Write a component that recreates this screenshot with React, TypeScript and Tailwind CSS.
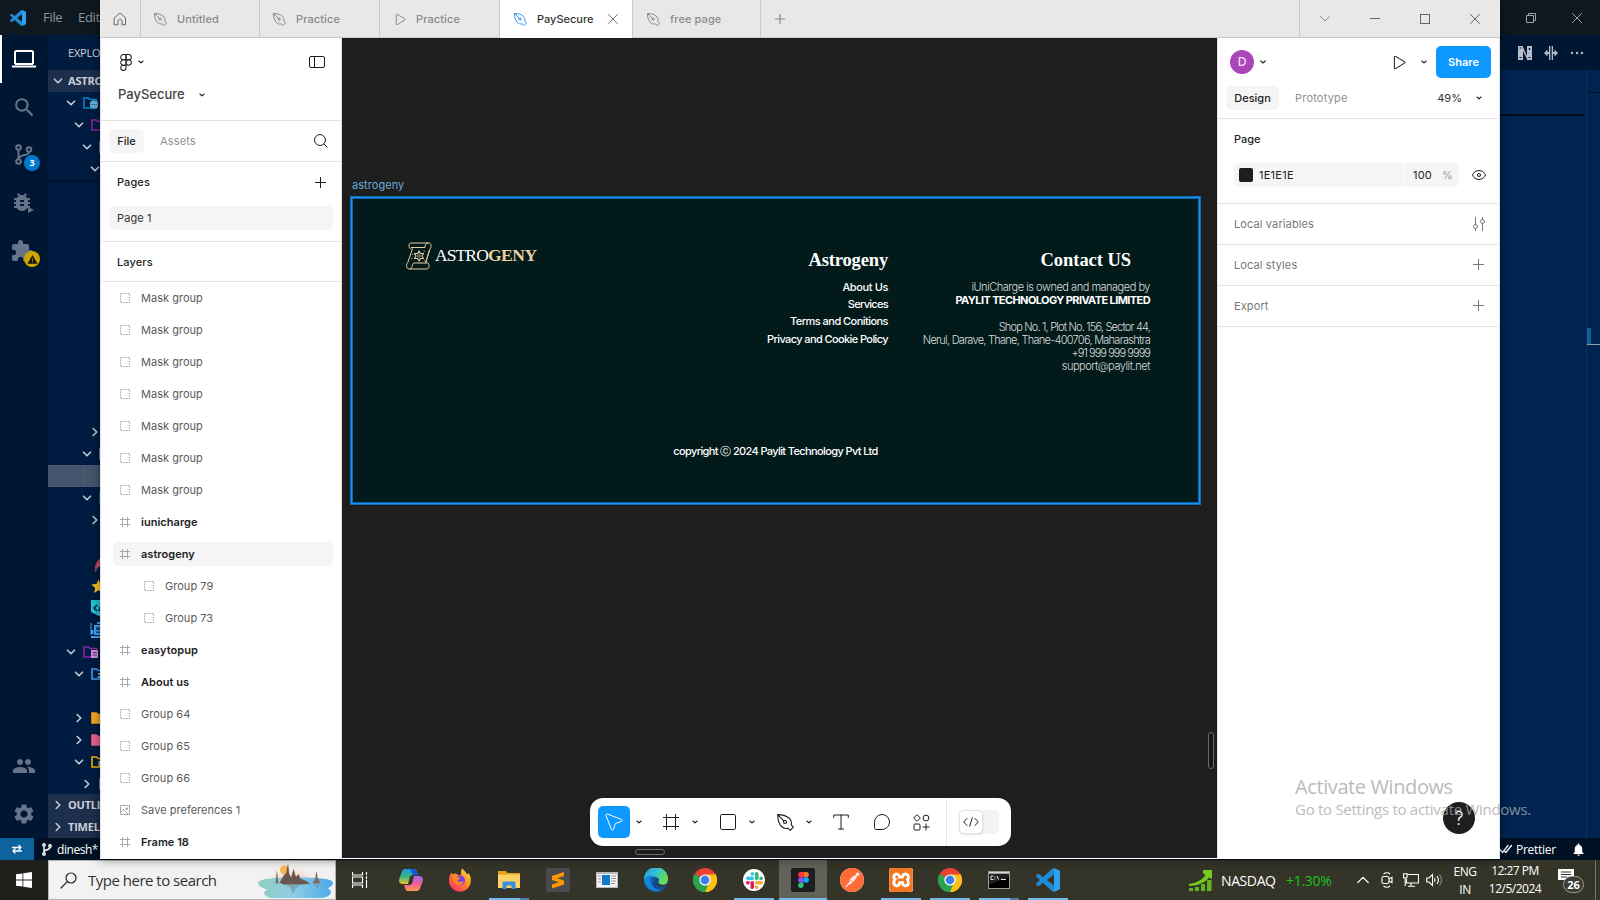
import React from "react";
import { MdBugReport, MdExtension, MdNotifications, MdPeople, MdSearch, MdSettings, MdStar, MdWarning } from "react-icons/md";
import { SiPostman, SiXampp } from "react-icons/si";

type IconProps = { className?: string };

const VS_PATH =
  "M23.15 2.587L18.21.21a1.494 1.494 0 0 0-1.705.29l-9.46 8.63-4.12-3.128a.999.999 0 0 0-1.276.057L.327 7.261A1 1 0 0 0 .326 8.74L3.899 12 .326 15.26a1 1 0 0 0 .001 1.479L1.65 17.94a.999.999 0 0 0 1.276.057l4.12-3.128 9.46 8.63a1.492 1.492 0 0 0 1.704.29l4.942-2.377A1.5 1.5 0 0 0 24 20.06V3.939a1.5 1.5 0 0 0-.85-1.352zm-5.146 14.861L10.826 12l7.178-5.448v10.896z";

const FIGMA_PATHS = [
  { d: "M9.5 57a9.5 9.5 0 0 0 9.5-9.5V38H9.5a9.5 9.5 0 0 0 0 19z", c: "#24cb71" },
  { d: "M0 28.5A9.5 9.5 0 0 1 9.5 19H19v19H9.5A9.5 9.5 0 0 1 0 28.5z", c: "#874fff" },
  { d: "M0 9.5A9.5 9.5 0 0 1 9.5 0H19v19H9.5A9.5 9.5 0 0 1 0 9.5z", c: "#ff3737" },
  { d: "M19 0h9.5a9.5 9.5 0 0 1 0 19H19V0z", c: "#ff7237" },
  { d: "M38 28.5a9.5 9.5 0 1 1-19 0 9.5 9.5 0 0 1 19 0z", c: "#00b6ff" },
];

function VsLogo({ className }: IconProps) {
  return (
    <svg viewBox="0 0 24 24" className={className}>
      <path d={VS_PATH} fill="#1f8ad6" />
      <path d="M18 .2l5.2 2.4a1.5 1.5 0 0 1 .8 1.3v16.2a1.5 1.5 0 0 1-.8 1.3L18.2 23.8z" fill="#2ea3ee" />
    </svg>
  );
}

function Line({ className, d, vb = "0 0 16 16", w = 1 }: IconProps & { d: string; vb?: string; w?: number }) {
  return (
    <svg viewBox={vb} className={className} fill="none" stroke="currentColor" strokeWidth={w} strokeLinecap="round" strokeLinejoin="round">
      <path d={d} />
    </svg>
  );
}

function Caret({ className = "" }: IconProps) {
  return <Line className={`h-[8px] w-[8px] shrink-0 ${className}`} vb="0 0 8 8" d="M1.900 3 4 4.900 6.100 3" w={1.100} />;
}

function Pen({ className }: IconProps) {
  return (
    <svg viewBox="0 0 17 17" className={className} fill="none" stroke="currentColor" strokeWidth="1.1" strokeLinejoin="round">
      <path d="M.6.6C5.4.8 9.4 1.6 12 4c2 1.900 2.900 4.300 2.200 6.800l2.200 2.400-3.200 3.200-2.400-2.200C8.300 14.900 5.900 14 4 12 1.600 9.400.8 5.400.6.6zM.8.800l6 6" />
      <circle cx="8" cy="8" r="1.500" />
    </svg>
  );
}

function Play({ className }: IconProps) {
  return <Line className={className} vb="0 0 14 16" d="M1.500 2.200c0-.8.6-1.200 1.300-.8l9.500 5.700c.7.400.7 1.200 0 1.600L2.800 14.600c-.7.400-1.300 0-1.300-.8z" w={1.100} />;
}

/* ---------- Code editor window ---------- */

type TreeRow = { dir?: "down" | "right"; pad?: string; icon?: React.ReactNode; active?: boolean };

function Folder({ color, solid, children }: { color: string; solid?: boolean; children?: React.ReactNode }) {
  return (
    <svg viewBox="0 0 16 14" className="h-[14px] w-4 shrink-0" fill={solid ? color : "none"} stroke={color} strokeWidth="1.500">
      <path d="M1 2h4.500l1.500 1.500h6.500v8.500H1z" />
      {children}
    </svg>
  );
}

const globe = (
  <g>
    <circle cx="11" cy="8.500" r="4" fill="#8fd3fb" stroke="none" />
    <path d="M7.500 8.500h7M11 5v7M9.500 5.300c-1 2-1 4 0 6.400M12.500 5.300c1 2 1 4 0 6.400" stroke="#0b5a94" strokeWidth=".6" />
  </g>
);

const stickyRows: TreeRow[] = [
  { dir: "down", pad: "pl-[18px]", icon: <Folder color="#0288d1">{globe}</Folder> },
  { dir: "down", pad: "pl-[26px]", icon: <Folder color="#8e24aa"><path d="M9 7h6v6H9z" fill="#b567c9" stroke="none" /></Folder> },
  { dir: "down", pad: "pl-[34px]", icon: <Folder color="#90a4ae" /> },
  { dir: "down", pad: "pl-[42px]" },
];

const treeRows: TreeRow[] = [
  { dir: "right", pad: "pl-[42px]" },
  { dir: "down", pad: "pl-[34px]", icon: <Folder color="#90a4ae" /> },
  { active: true },
  { dir: "down", pad: "pl-[34px]", icon: <Folder color="#00897b" /> },
  { dir: "right", pad: "pl-[42px]" },
  {},
  { pad: "pl-[46px]", icon: <svg viewBox="0 0 12 16" className="h-4 w-3 shrink-0"><path d="M1 15C0 8 4 2 11 0c1 6-3 11-9 12z" fill="#c2455a" /><path d="M1 16 7 5" stroke="#e0808c" strokeWidth=".7" /></svg> },
  { pad: "pl-[42px]", icon: <MdStar className="h-[17px] w-[17px] shrink-0 text-[#ffca28]" /> },
  { pad: "pl-[43px]", icon: <svg viewBox="0 0 16 16" className="h-4 w-4 shrink-0"><path d="M0 0h16v12l-8 4-8-4z" fill="#26c6da" /><path d="M6 5 3 8l3 3M8 11l2-6" stroke="#00204a" strokeWidth="1.600" fill="none" /></svg> },
  { pad: "pl-[42px]", icon: <svg viewBox="0 0 16 16" className="h-4 w-4 shrink-0" fill="#42a5f5"><path d="M4 3h10v10H4zM.5 1h1v12h-1zM1 14h15v2H1zM7 0h5v2H7zM1.500 8h2v4h-2z" /><path d="M6 5h7v3H6zM6 9.500h7V11H6z" fill="#0c4a86" /></svg> },
  { dir: "down", pad: "pl-[18px]", icon: <Folder color="#8e24aa"><path d="M8 5h7v8H8z" fill="#ce93d8" stroke="none" /><path d="M9.500 7.500h4M9.500 10h4" stroke="#6a1b9a" strokeWidth="1" /></Folder> },
  { dir: "down", pad: "pl-[26px]", icon: <Folder color="#42a5f5"><path d="M6.500 10h3M7 7h3" stroke="#90caf9" strokeWidth="1.300" /></Folder> },
  {},
  { dir: "right", pad: "pl-[26px]", icon: <Folder color="#f9a825" solid /> },
  { dir: "right", pad: "pl-[26px]", icon: <Folder color="#f06292" solid /> },
  { dir: "down", pad: "pl-[26px]", icon: <Folder color="#ffb300"><path d="M7.500 6H14v6H7.500z" fill="#c9b27a" stroke="none" /></Folder> },
  { dir: "right", pad: "pl-[34px]", icon: <Folder color="#90a4ae" /> },
];

function Twist({ dir }: { dir: "down" | "right" }) {
  return <Line className="h-[10px] w-[10px] shrink-0 text-[#c5ccd6]" vb="0 0 10 10" d={dir === "down" ? "M1.500 3.200 5 6.800l3.500-3.600" : "M3.200 1.500 6.800 5 3.200 8.500"} w={1.600} />;
}

function Tree({ rows }: { rows: TreeRow[] }) {
  return (
    <>
      {rows.map((r, i) => (
        <div key={i} className={`flex h-[22px] items-center gap-[7px] ${r.pad ?? ""} ${r.active ? "bg-[#44566f]" : ""}`}>
          {r.active && <div className="ml-[36px] h-full w-px bg-[#5c5a55]" />}
          {r.dir && <Twist dir={r.dir} />}
          {r.icon}
        </div>
      ))}
    </>
  );
}

function Section({ name }: { name: string }) {
  return (
    <div className="flex h-[22px] items-center gap-[5px] bg-[#1c2f4d] pl-[5px] text-[11px] font-bold text-[#ccd0d6]">
      <Twist dir={name === "ASTROGENY" ? "down" : "right"} />
      <span className="tracking-[-0.2px]">{name}</span>
    </div>
  );
}

function ActivityCell({ children }: { children: React.ReactNode }) {
  return <div className="relative flex h-12 w-12 shrink-0 items-center justify-center text-[#667489]">{children}</div>;
}

function Editor() {
  return (
    <div className="flex h-[860px] w-full flex-col font-['Open_Sans','Noto_Sans',sans-serif]">
      <div className="flex h-[35px] shrink-0 items-center bg-[#0e1820] text-[13px] text-[#90969b]">
        <VsLogo className="ml-[10px] h-4 w-4" />
        <span className="ml-[17px] w-[35px] pt-px tracking-[-0.3px]">File</span>
        <span className="pt-px tracking-[-0.3px]">Edit</span>
        <svg viewBox="0 0 10 10" className="ml-auto mr-[36px] h-[10px] w-[10px]" fill="none" stroke="#a0a5aa">
          <path d="M.5 2.500h7v7h-7zM2.500 2.500v-2h7v7h-2" />
        </svg>
        <Line className="mr-[18px] h-[10px] w-[10px] text-[#a0a5aa]" vb="0 0 10 10" d="M.5.500l9 9M9.500.500l-9 9" />
      </div>
      <div className="flex min-h-0 flex-1">
        <div className="flex w-12 shrink-0 flex-col bg-[#001733]">
          <div className="flex h-12 items-center justify-center border-l-2 border-white pr-[2px] text-white">
            <svg viewBox="0 0 24 18" className="h-[18px] w-6" fill="none" stroke="currentColor" strokeWidth="2">
              <path d="M3 14V2.500C3 1.600 3.600 1 4.500 1h15c.9 0 1.500.6 1.500 1.500V14M0 16.500h24M3 14h18" />
            </svg>
          </div>
          <ActivityCell><MdSearch className="h-[25px] w-[25px]" /></ActivityCell>
          <ActivityCell>
            <svg viewBox="0 0 18 22" className="h-[22px] w-[18px]" fill="none" stroke="currentColor" strokeWidth="2">
              <circle cx="3.500" cy="3.500" r="2.300" /><circle cx="3.500" cy="17.500" r="2.300" /><circle cx="14" cy="5.500" r="2.300" />
              <path d="M3.500 6v9M14 8c0 4-8 2-10 6" />
            </svg>
            <span className="absolute left-6 top-6 flex h-4 w-4 items-center justify-center rounded-full bg-[#007acc] text-[9px] font-bold text-white">3</span>
          </ActivityCell>
          <ActivityCell>
            <MdBugReport className="-ml-1 -mt-[2px] h-[24px] w-[24px]" />
            <svg viewBox="0 0 6 6" className="absolute left-[28px] top-[28px] h-[6px] w-[6px]" fill="currentColor"><path d="M0 0l6 3-6 3z" /></svg>
          </ActivityCell>
          <ActivityCell>
            <MdExtension className="-ml-1 h-[24px] w-[24px]" />
            <span className="absolute left-6 top-6 flex h-4 w-4 items-center justify-center rounded-full bg-[#cca700] text-[#171717]"><MdWarning className="h-[11px] w-[11px]" /></span>
          </ActivityCell>
          <div className="flex-1" />
          <ActivityCell><MdPeople className="h-[24px] w-[24px]" /></ActivityCell>
          <ActivityCell><MdSettings className="h-[24px] w-[24px]" /></ActivityCell>
        </div>
        <div className="flex w-[52px] shrink-0 flex-col overflow-hidden bg-[#001c40]">
          <div className="flex h-[35px] shrink-0 items-center pl-5 pt-px text-[11px] tracking-[-0.2px] text-[#ccd2da]">EXPLORER</div>
          <Section name="ASTROGENY" />
          <div className="border-b-2 border-[#00122b]"><Tree rows={stickyRows} /></div>
          <div className="h-[239px] shrink-0" />
          <Tree rows={treeRows} />
          <div className="-mt-px"><Section name="OUTLINE" /></div>
          <Section name="TIMELINE" />
        </div>
        <div className="flex flex-1 flex-col bg-[#002451]">
          <div className="flex h-[35px] items-center justify-end gap-[12px] bg-[#001733] pr-[16px] text-[#b6bec9]">
            <svg viewBox="0 0 14 14" className="h-[14px] w-[14px]" fill="currentColor">
              <path d="M0 0h5v14H0zM9 0h5v14H9zM5 1l4 9v3L5 5z" />
              <path d="M1.500 2h2M10.500 3h2M11.500 2v2M1.500 11.500h2M10.500 11.500h2" stroke="#001733" />
            </svg>
            <svg viewBox="0 0 14 14" className="h-[14px] w-[14px]" fill="currentColor"><path d="M5 0h1.300v14H5zM7.700 0H9v14H7.700zM0 7l3.500-3.500v2.500H5v2H3.500v2.500zM14 7l-3.500-3.500v2.500H9v2h1.500v2.500z" /></svg>
            <svg viewBox="0 0 14 4" className="h-1 w-[14px]" fill="currentColor"><circle cx="2" cy="2" r="1.200" /><circle cx="7" cy="2" r="1.200" /><circle cx="12" cy="2" r="1.200" /></svg>
          </div>
          <div className="flex flex-1">
            <div className="flex-1 pt-[44px]"><div className="mr-[2px] h-[2px] bg-[#000b1c]" /></div>
            <div className="w-[14px] border-l border-[#0e3059] pt-[22px]">
              <div className="h-px bg-[#00122b]" />
              <div className="mt-[235px] h-[16px] w-1 bg-[#0f5f93]" />
              <div className="h-px bg-[#8fa0b5]" />
            </div>
          </div>
        </div>
      </div>
      <div className="flex h-[22px] shrink-0 items-center bg-[#001126] text-[12px] text-white">
        <div className="flex h-full w-[34px] items-center justify-center bg-[#0e639c]">
          <Line className="h-[12px] w-[12px]" vb="0 0 12 12" d="M1.500 4.500H10M8 2.500 10 4.500 8 6.500M10.500 8H2M4 6 2 8l2 2" w={1.300} />
        </div>
        <svg viewBox="0 0 10 13" className="ml-2 h-[13px] w-[10px]" fill="none" stroke="currentColor" strokeWidth="1.400">
          <circle cx="2" cy="2" r="1.200" /><circle cx="2" cy="11" r="1.200" /><circle cx="8" cy="3" r="1.200" /><path d="M2 3.500v6M8 4.500C8 7.500 2 6 2 9" />
        </svg>
        <span className="ml-[5px] pt-px tracking-[-0.45px]">dinesh*</span>
        <Line className="ml-auto h-[10px] w-[14px]" vb="0 0 14 10" d="M1 5.500 3.500 8.500 9 1.500M5.500 7 6.800 8.500 12.500 1.500" w={1.300} />
        <span className="ml-[3px] pt-px tracking-[-0.25px]">Prettier</span>
        <MdNotifications className="ml-[15px] mr-[14px] h-[15px] w-[15px]" />
      </div>
    </div>
  );
}

/* ---------- Design tool window ---------- */

function Tab({ label, className, icon, active }: { label: string; className: string; icon: React.ReactNode; active?: boolean }) {
  return (
    <div className={`flex h-full shrink-0 items-center border-r border-[#c9c9c9] pl-[13px] ${active ? "bg-white text-[#333]" : "border-b pt-px text-[#8a8a8a]"} ${className}`}>
      {icon}
      <span className={`ml-[10px] pt-px text-[11px] font-medium ${active ? "" : "tracking-[0.1px]"}`}>{label}</span>
      {active && <Line className="ml-[15px] h-[10px] w-[10px] text-[#777]" vb="0 0 10 10" d="M.5.500l9 9M9.500.500l-9 9" w={1} />}
    </div>
  );
}

function TitleBar() {
  return (
    <div className="flex h-[38px] shrink-0 bg-[#e8e8e8]">
      <div className="flex w-[41px] items-center justify-center border-b border-r border-[#c9c9c9] text-[#666]">
        <Line className="h-[14px] w-[14px]" vb="0 0 14 14" d="M1.500 5.800 7 1l5.500 4.800v7H9V9c0-1-.8-1.700-2-1.700S5 8 5 9v3.800H1.500z" />
      </div>
      <Tab label="Untitled" className="w-[119px]" icon={<Pen className="h-[13px] w-[13px] text-[#777]" />} />
      <Tab label="Practice" className="w-[120px]" icon={<Pen className="h-[13px] w-[13px] text-[#777]" />} />
      <Tab label="Practice" className="w-[120px]" icon={<Play className="ml-[2px] h-[13px] w-[11px] text-[#777]" />} />
      <Tab label="PaySecure" className="w-[133px]" active icon={<Pen className="ml-px h-[13px] w-[13px] text-[#0d84f0]" />} />
      <Tab label="free page" className="w-[128px]" icon={<Pen className="ml-px h-[13px] w-[13px] text-[#777]" />} />
      <div className="flex flex-1 items-center border-b border-r border-[#c9c9c9] pl-[14px] text-[#888]">
        <Line className="h-[10px] w-[10px]" vb="0 0 10 10" d="M5 .500v9M.5 5h9" w={1.200} />
      </div>
      <div className="flex w-[200px] items-center border-b border-[#c9c9c9] text-[#666]">
        <div className="flex w-[50px] justify-center"><Line className="h-[10px] w-[10px] text-[#888]" vb="0 0 10 10" d="M.5 2.500 5 7l4.500-4.500" /></div>
        <div className="flex w-[50px] justify-center"><div className="h-px w-[10px] bg-[#666]" /></div>
        <div className="flex w-[50px] justify-center"><div className="h-[10px] w-[10px] border border-[#666]" /></div>
        <div className="flex w-[50px] justify-center"><Line className="h-[10px] w-[10px]" vb="0 0 10 10" d="M.5.500l9 9M9.500.500l-9 9" /></div>
      </div>
    </div>
  );
}

type Layer = { name: string; kind: "group" | "frame" | "image"; child?: boolean; selected?: boolean };

const layers: Layer[] = [
  ...Array.from({ length: 7 }, (): Layer => ({ name: "Mask group", kind: "group" })),
  { name: "iunicharge", kind: "frame" },
  { name: "astrogeny", kind: "frame", selected: true },
  { name: "Group 79", kind: "group", child: true },
  { name: "Group 73", kind: "group", child: true },
  { name: "easytopup", kind: "frame" },
  { name: "About us", kind: "frame" },
  { name: "Group 64", kind: "group" },
  { name: "Group 65", kind: "group" },
  { name: "Group 66", kind: "group" },
  { name: "Save preferences 1", kind: "image" },
  { name: "Frame 18", kind: "frame" },
];

function LayerIcon({ kind }: { kind: Layer["kind"] }) {
  return (
    <svg viewBox="0 0 10 10" className="h-[10px] w-[10px] shrink-0" fill="none" stroke="#a8a8a8">
      {kind === "group" && <path d="M.5.500h9v9h-9z" strokeDasharray="1.500 1" />}
      {kind === "frame" && <path d="M2.500 0v10M7.500 0v10M0 2.500h10M0 7.500h10" />}
      {kind === "image" && <path d="M.5.500h9v9h-9zM.5 7.500 3.500 4.500l5 5M6 3h1.500v1.500H6z" />}
    </svg>
  );
}

function LeftPanel() {
  return (
    <div className="flex w-[242px] shrink-0 flex-col border-l border-r border-[#e3e3e3] bg-white text-[11px] text-[#1e1e1e]">
      <div className="h-[83px] shrink-0 border-b border-[#e3e3e3]">
        <div className="flex h-[48px] items-center pl-[19px] pr-4">
          <svg viewBox="-2 -2 42 61" className="h-[17px] w-[12px]" fill="none" stroke="#1e1e1e" strokeWidth="3.600">
            {FIGMA_PATHS.map((p) => <path key={p.d} d={p.d} />)}
          </svg>
          <Caret className="ml-[5px]" />
          <svg viewBox="0 0 16 12" className="ml-auto h-[12px] w-4" fill="none" stroke="#1e1e1e" strokeWidth="1"><rect x=".5" y=".5" width="15" height="11" rx="1.500" /><path d="M5.500.500v11" /></svg>
        </div>
        <div className="flex h-[17px] items-center pl-[17px]">
          <span className="text-[13px] font-medium text-[#444]">PaySecure</span>
          <Caret className="ml-[13px]" />
        </div>
      </div>
      <div className="flex h-[41px] shrink-0 items-center border-b border-[#e3e3e3] pl-2 pr-[13px] font-medium">
        <span className="flex h-6 w-[35px] items-center justify-center rounded-[5px] bg-[#f5f5f5]">File</span>
        <span className="ml-[16px] font-normal tracking-[0.15px] text-[#8f8f8f]">Assets</span>
        <Line className="mb-px ml-auto h-[14px] w-[14px]" vb="0 0 14 14" d="M11.500 6a5.500 5.500 0 1 1-11 0 5.500 5.500 0 0 1 11 0zM10 10l3.300 3.300" />
      </div>
      <div className="flex h-[80px] shrink-0 flex-col border-b border-[#e3e3e3] pl-2 pr-2">
        <div className="flex h-[44px] items-center pb-[3px] pl-2 pr-[7px] font-medium tracking-[0.1px]">Pages
          <Line className="mb-px ml-auto h-[11px] w-[11px]" vb="0 0 11 11" d="M5.500 0v11M0 5.500h11" />
        </div>
        <div className="flex h-6 items-center rounded-[5px] bg-[#f5f5f5] pl-2 tracking-[0.1px] text-[#333]">Page 1</div>
      </div>
      <div className="flex h-10 shrink-0 items-center border-b border-[#e3e3e3] pl-4 pt-[2px] font-medium tracking-[0.1px]">Layers</div>
      {layers.map((l, i) => (
        <div key={i} className="flex h-8 shrink-0 items-center pl-3 pr-2">
          <div className={`flex h-6 flex-1 items-center gap-[11px] rounded-[5px] tracking-[0.03px] ${l.child ? "pl-[31px]" : "pl-[7px]"} ${l.selected ? "bg-[#f5f5f5]" : ""} ${l.kind === "frame" ? "font-semibold" : "text-[#5a5a5a]"}`}>
            <LayerIcon kind={l.kind} />
            <span>{l.name}</span>
          </div>
        </div>
      ))}
    </div>
  );
}

const links = [
  { t: "About Us", c: "tracking-[-0.38px]" },
  { t: "Services", c: "tracking-[-0.7px]" },
  { t: "Terms and Conitions", c: "tracking-[-0.54px]" },
  { t: "Privacy and Cookie Policy", c: "tracking-[-0.6px]" },
];

function FooterFrame() {
  return (
    <div className="absolute left-[8px] top-[158px] flex h-[309px] w-[851px] flex-col border border-[#126bb5] bg-[#031a1a] text-white shadow-[inset_0_0_0_1px_#1890f5,inset_0_0_0_2px_#0d66ad]">
      <div className="flex h-[236px] items-start">
        <div className="flex items-center pl-[55px] pt-[45px]">
          <svg viewBox="0 0 26 28" className="h-[28px] w-[26px]" fill="none" stroke="#e8cf9f" strokeWidth="1" strokeLinejoin="round">
            <path d="M4 6.500C2.500 5 2.500 1 5 1h18c2.500 0 2.500 4.500 1 6M5 5.500h14c0-2.500 1-4.500 3-4.500M4.500 6.500 5.500 6M24 7l-4.500 14M6.500 6.500 1.800 20.500C0 22 0 27 3 27h18c2.500 0 2.500-5 1-6H8c-2 0-1 5-4 6M19.500 21l4-13" />
            <path d="M13 9l1.400 2.500H17.500L16 14l1.500 2.500h-3.100L13 19l-1.400-2.500H8.500L10 14l-1.500-2.500h3.100z" strokeWidth="1.100" />
            <circle cx="13" cy="14" r="1.300" strokeWidth=".7" />
            <path d="M6 12l1.500.5M19 9l-1.500 1M5 17l1.500-1M18 19l1-1" strokeWidth=".7" />
          </svg>
          <span className="ml-[3px] font-['Liberation_Serif',serif] text-[17.500px] leading-none tracking-[-0.9px]">ASTRO<b className="tracking-[-0.45px] text-[#ecd0a2]">GENY</b></span>
        </div>
        <div className="ml-auto mr-px flex w-[200px] flex-col items-end pt-[53px]">
          <div className="h-[28px] font-['Liberation_Serif',serif] text-[18.500px] font-bold leading-[20px] tracking-[-0.15px]">Astrogeny</div>
          {links.map((l) => <div key={l.t} className={`h-[17.200px] whitespace-nowrap text-[11px] font-medium leading-[18px] ${l.c}`}>{l.t}</div>)}
        </div>
        <div className="mr-[50px] flex w-[261px] flex-col items-end whitespace-nowrap pt-[53px] text-[11px] font-light leading-[13.200px] text-[#d9dede]">
          <div className="mr-[19px] h-[31px] font-['Liberation_Serif',serif] text-[18.500px] font-bold leading-[20px] tracking-[-0.05px] text-white">Contact US</div>
          <div className="tracking-[-0.48px]">iUniCharge is owned and managed by</div>
          <div className="font-bold tracking-[-0.6px] text-white">PAYLIT TECHNOLOGY PRIVATE LIMITED</div>
          <div className="h-[13.200px]" />
          <div className="tracking-[-0.82px]">Shop No. 1, Plot No. 156, Sector 44,</div>
          <div className="tracking-[-0.73px]">Nerul, Darave, Thane, Thane-400706, Maharashtra</div>
          <div className="tracking-[-0.95px]">+91 999 999 9999</div>
          <div className="tracking-[-0.45px]">support@paylit.net</div>
        </div>
      </div>
      <div className="mt-[10px] text-center text-[11px] font-medium leading-[16px] tracking-[-0.62px]">copyright ⓒ 2024 Paylit Technology Pvt Ltd</div>
    </div>
  );
}

function Toolbar() {
  return (
    <div className="absolute left-[248px] top-[760px] flex h-[48px] w-[421px] items-center rounded-[13px] bg-white pl-2 text-[#1e1e1e]">
      <div className="flex h-8 w-8 items-center justify-center rounded-[5px] bg-[#0d99ff] text-white">
        <Line className="h-[18px] w-[18px]" vb="0 0 18 18" d="M1 2.500C.6 1.500 1.500.700 2.500 1.100l14 5.400c1.100.4 1 1.700-.1 2l-5.400 1.700c-.4.100-.7.400-.8.800L8.500 16.400c-.3 1.100-1.600 1.200-2 .1z" />
      </div>
      <Caret className="ml-[5px]" />
      <Line className="ml-[20px] h-4 w-4" d="M3.500 0v16M12.500 0v16M0 3.500h16M0 12.500h16" />
      <Caret className="ml-[12px]" />
      <svg viewBox="0 0 16 16" className="ml-[21px] h-4 w-4" fill="none" stroke="currentColor"><rect x=".5" y=".5" width="15" height="15" rx="1.200" /></svg>
      <Caret className="ml-[12px]" />
      <Pen className="ml-[21px] h-[17px] w-[17px]" />
      <Caret className="ml-[11px]" />
      <Line className="ml-[20px] h-4 w-4" d="M.7 3.500V1h14.600v2.500M8 1v14M5.500 15h5" />
      <Line className="ml-[25px] h-4 w-4" d="M.5 8A7.500 7.500 0 1 1 8 15.500H2c-.9 0-1.500-.6-1.500-1.500z" />
      <svg viewBox="0 0 17 17" className="ml-[23px] h-[17px] w-[17px]" fill="none" stroke="currentColor" strokeLinejoin="round">
        <path d="M4 .700 7.300 4 4 7.300.700 4z" /><circle cx="13" cy="4" r="2.900" /><rect x="1" y="10" width="6" height="6" rx="1" /><path d="M13 9.500v7M9.500 13h7" />
      </svg>
      <div className="ml-[16px] h-full w-px bg-[#e6e6e6]" />
      <div className="ml-[12px] flex h-6 w-10 items-center rounded-[5px] bg-[#f3f3f3]">
        <div className="flex h-6 w-6 items-center justify-center rounded-[5px] border border-[#e3e3e3] bg-white shadow-sm"><Line className="h-[10px] w-4" vb="0 0 16 10" d="M4 1.500.7 5 4 8.500M12 1.500 15.300 5 12 8.500M9.300.800 6.700 9.200" /></div>
      </div>
    </div>
  );
}

function Canvas() {
  return (
    <div className="relative flex-1 overflow-hidden bg-[#1e1e1e]">
      <span className="absolute left-[10px] top-[139px] text-[11px] leading-4 tracking-[0.05px] text-[#69aad8]">astrogeny</span>
      <FooterFrame />
      <Toolbar />
      <div className="absolute left-[293px] top-[811px] h-[6px] w-[30px] rounded-full border border-[#6b6b6b]" />
      <div className="absolute left-[866px] top-[694px] h-[37px] w-[6px] rounded-full border border-[#6b6b6b] bg-[#171717]" />
    </div>
  );
}

function RightRow({ label, icon }: { label: string; icon: React.ReactNode }) {
  return <div className="flex h-[41px] shrink-0 items-center justify-between border-b border-[#e3e3e3] pl-4 pr-[15px] tracking-[0.12px] text-[#777]">{label}{icon}</div>;
}

function RightPanel() {
  const plus = <Line className="mb-px h-[11px] w-[11px]" vb="0 0 11 11" d="M5.500 0v11M0 5.500h11" />;
  return (
    <div className="flex w-[283px] shrink-0 flex-col border-l border-r border-[#e3e3e3] bg-white text-[11px] text-[#1e1e1e]">
      <div className="flex h-[81px] shrink-0 flex-col border-b border-[#e3e3e3] pt-2">
        <div className="flex h-8 items-center pl-3 pr-2">
          <div className="flex h-6 w-6 items-center justify-center rounded-full bg-[#aa46b9] text-[12px] font-medium text-[#f3dff6]">D</div>
          <Caret className="ml-[5px] scale-110" />
          <Play className="ml-auto h-[15px] w-[13px]" />
          <Caret className="ml-[14px]" />
          <div className="ml-[8px] flex h-8 w-[55px] items-center justify-center rounded-[5px] bg-[#0d99ff] font-semibold text-white">Share</div>
        </div>
        <div className="mt-2 flex h-6 items-center pl-2 pr-4">
          <span className="flex h-6 w-[53px] items-center justify-center rounded-[5px] bg-[#f5f5f5] font-medium">Design</span>
          <span className="ml-[16px] tracking-[0.2px] text-[#8f8f8f]">Prototype</span>
          <span className="ml-auto text-[#333]">49%</span>
          <Caret className="ml-[13px]" />
        </div>
      </div>
      <div className="h-[85px] shrink-0 border-b border-[#e3e3e3] pl-4 pr-[13px]">
        <div className="flex h-[44px] items-center pb-[3px] font-medium">Page</div>
        <div className="flex h-6 items-center">
          <div className="flex h-6 w-[170px] items-center rounded-l-[5px] bg-[#f5f5f5] pl-[5px] tracking-[0.25px]"><div className="mr-[6px] h-[14px] w-[14px] rounded-[2px] bg-[#1e1e1e]" />1E1E1E</div>
          <div className="ml-px flex h-6 w-[54px] items-center rounded-r-[5px] bg-[#f5f5f5] pl-[8px] tracking-[0.2px]">100<span className="ml-[10px] text-[#999]">%</span></div>
          <svg viewBox="0 0 14 10" className="ml-auto h-[10px] w-[14px]" fill="none" stroke="currentColor"><path d="M.5 5C1.500 2.500 4 .500 7 .500S12.500 2.500 13.500 5C12.500 7.500 10 9.500 7 9.500S1.500 7.500.500 5z" /><circle cx="7" cy="5" r="1.500" /></svg>
        </div>
      </div>
      <RightRow label="Local variables" icon={<Line className="-mr-px h-[14px] w-[12px]" vb="0 0 12 14" d="M2.500 0v7.500M2.500 11.500V14M4.500 9.500a2 2 0 1 1-4 0 2 2 0 0 1 4 0zM9.500 14V6.500M9.500 2.500V0M11.500 4.500a2 2 0 1 1-4 0 2 2 0 0 1 4 0z" />} />
      <RightRow label="Local styles" icon={plus} />
      <RightRow label="Export" icon={plus} />
    </div>
  );
}

/* ---------- Taskbar ---------- */

function Chrome() {
  return (
    <svg viewBox="0 0 24 24" className="h-6 w-6">
      <path d="M12 12 1.600 6A12 12 0 0 1 22.400 6z" fill="#ea4335" />
      <path d="M12 12 22.400 6A12 12 0 0 1 12 24z" fill="#fbc116" />
      <path d="M12 12v12A12 12 0 0 1 1.600 6z" fill="#34a853" />
      <path d="M12 6.500h10.600A12 12 0 0 1 12 24l4.800-9.200z" fill="#fbc116" />
      <path d="M1.600 6 7.200 14.800 12 17.500l3-.5-3 7A12 12 0 0 1 1.600 6z" fill="#2ba24c" />
      <circle cx="12" cy="12" r="5.600" fill="#fff" /><circle cx="12" cy="12" r="4.400" fill="#3b7ded" />
    </svg>
  );
}

function Copilot() {
  return (
    <svg viewBox="0 0 24 22" className="h-[22px] w-6">
      <defs>
        <linearGradient id="ca" x1="0" y1="0" x2="0" y2="1"><stop offset="0" stopColor="#1b9df0" /><stop offset=".5" stopColor="#35b77a" /><stop offset="1" stopColor="#f2c12e" /></linearGradient>
        <linearGradient id="cb" x1="0" y1="0" x2="0" y2="1"><stop offset="0" stopColor="#9b6cf0" /><stop offset=".5" stopColor="#ef5c9b" /><stop offset="1" stopColor="#ff9a4d" /></linearGradient>
      </defs>
      <path d="M6 0h9c2 0 2.500 1.500 3 3l1 3h-5c-2 0-3 1-3.500 3L9 15H4c-4 0-4.500-3-3.500-6L3 2.500C3.600 1 4.500 0 6 0z" fill="url(#ca)" />
      <path d="M11 0h4c2 0 2.500 1.500 3 3l1 3h-5c-1-1-1-4-3-6z" fill="#1956d6" />
      <path d="M18 22H9c-2 0-2.500-1.500-3-3l-1-3h5c2 0 3-1 3.500-3L15 7h5c4 0 4.500 3 3.500 6L21 19.500c-.6 1.500-1.500 2.500-3 2.500z" fill="url(#cb)" />
    </svg>
  );
}

function Firefox() {
  return (
    <svg viewBox="0 0 24 24" className="h-6 w-6">
      <defs><linearGradient id="ff" x1="1" y1="0" x2=".2" y2="1"><stop offset="0" stopColor="#fff04f" /><stop offset=".45" stopColor="#ff9420" /><stop offset="1" stopColor="#ff2a6a" /></linearGradient></defs>
      <path d="M14 .500c3 2 3.500 4 5.500 6l1-1.500c2 3 2.500 5 2.300 8A10.900 10.900 0 0 1 1 12.500C1 9 2 6.500 3.500 4.500L4.500 6.500c1-1 2-1.200 3.500-1L10 7h3c0-2.500 0-4.500 1-6.500z" fill="url(#ff)" />
      <circle cx="12" cy="12.500" r="5" fill="#7a3fe0" /><path d="M5 9.500c3-1.500 5 0 7.500.500-1 1.500-2.500 1-3 2.500.5 2 4 2.500 6 0 0 4-4 5.500-7 4s-4-4-3.500-7z" fill="#ff8a1f" />
    </svg>
  );
}

function Edge() {
  return (
    <svg viewBox="0 0 24 24" className="h-6 w-6">
      <defs><linearGradient id="ed" x1="0" y1="0" x2="1" y2=".5"><stop offset="0" stopColor="#1f9de0" /><stop offset=".5" stopColor="#31c2d8" /><stop offset="1" stopColor="#68e04c" /></linearGradient></defs>
      <circle cx="12" cy="12" r="12" fill="#0f62b8" />
      <path d="M0 11A12 12 0 0 1 24 11c0 4-3 6-6 6-2.500 0-4-1-4-2 0-.8 1-1.300 1-3 0-2-2-3.500-5-3.500-5 0-9.500 1-10 4z" fill="url(#ed)" />
      <path d="M0 12.500C1 8.500 4.500 7 8.500 7.500 6 9.500 5.500 13 7 16c2 4.500 7 6 11 5A12 12 0 0 1 0 12.500z" fill="#1585d8" />
      <path d="M14 15c1 2 4 3.500 9.500 1.500-1 2-2.500 3.500-4 4.500-6 2-11-1-10.500-6.500.2-2 1.500-4 3-4.500 2 0 3 1 3 2.500 0 1.200-1 1.500-1 2.500z" fill="#124a8c" />
      <path d="M14 15c1 2.500 5 3 9.500 1.500" stroke="#373629" strokeWidth="1.300" fill="none" />
    </svg>
  );
}

function Explorer() {
  return (
    <svg viewBox="0 0 22 18" className="h-[18px] w-[22px]">
      <path d="M0 0h8l1.500 2H22v15H0z" fill="#e5a117" /><path d="M0 3.500h22V17H0z" fill="#fdd264" />
      <path d="M4.500 18v-5.500c0-1.500.5-2 2-2h9c1.500 0 2 .5 2 2V18h-4v-3.500h-5V18z" fill="#3a8fdc" />
    </svg>
  );
}

function Sublime() {
  return (
    <svg viewBox="0 0 24 24" className="h-6 w-6"><rect width="24" height="24" rx="2" fill="#4b4b4d" /><path d="M18 4 6 8v4l7 2.200L6 16.500V20.500L18 16.500v-4l-7-2.200L18 8z" fill="#ff9800" /></svg>
  );
}

function WindowApp() {
  return (
    <svg viewBox="0 0 22 16" className="h-4 w-[22px]"><path d="M0 0h22v16H0z" fill="#b9b9b9" /><path d="M1 2h20v13H1z" fill="#f4f4f4" /><path d="M6 3h8v10H6z" fill="#0b78d4" /><path d="M2 4h3M2 7h3M2 10h3M15 4h5M15 6.500h5M15 9h5M15 11.500h4" stroke="#999" /></svg>
  );
}

const SLACK = "M25.800 77.600c0 7.100-5.800 12.900-12.900 12.900S0 84.700 0 77.600s5.800-12.900 12.900-12.900h12.900v12.900z M32.300 77.600c0-7.100 5.800-12.900 12.900-12.900s12.900 5.800 12.900 12.900v32.300c0 7.100-5.800 12.900-12.900 12.900s-12.900-5.800-12.900-12.900V77.600z";

function Slack() {
  return (
    <div className="flex h-[22px] w-[22px] items-center justify-center rounded-full bg-white">
      <svg viewBox="0 0 122.800 122.800" className="h-[17px] w-[17px]">
        <path d={SLACK} fill="#e01e5a" />
        <path d={SLACK} fill="#36c5f0" transform="rotate(90 61.400 61.400)" />
        <path d={SLACK} fill="#2eb67d" transform="rotate(180 61.400 61.400)" />
        <path d={SLACK} fill="#ecb22e" transform="rotate(270 61.400 61.400)" />
      </svg>
    </div>
  );
}

function FigmaApp() {
  return (
    <div className="flex h-6 w-6 items-center justify-center rounded-[2px] bg-[#1e1e20]">
      <svg viewBox="0 0 38 57" className="h-4 w-[11px]">{FIGMA_PATHS.map((p) => <path key={p.d} d={p.d} fill={p.c} />)}</svg>
    </div>
  );
}

function Terminal() {
  return (
    <svg viewBox="0 0 22 18" className="h-[18px] w-[22px]"><path d="M0 0h22v18H0z" fill="#9c9c9c" /><path d="M1 3h20v14H1z" fill="#000" /><path d="M1 1h20v1H1z" fill="#d9d9d9" /><path d="M5.500 5H3v3.500h2.500M7 5.500v1M7 7.500v1M9 5l1.500 3.500M13 8.500h5" stroke="#e8e8e8" fill="none" /><path d="M1 3h20v3L1 14z" fill="#fff" opacity=".12" /></svg>
  );
}

type TaskApp = { icon: React.ReactNode; state?: "running" | "active" | "multi" };

const apps: TaskApp[] = [
  { icon: <Copilot /> },
  { icon: <Firefox /> },
  { icon: <Explorer />, state: "multi" },
  { icon: <Sublime /> },
  { icon: <WindowApp /> },
  { icon: <Edge /> },
  { icon: <Chrome /> },
  { icon: <Slack />, state: "running" },
  { icon: <FigmaApp />, state: "active" },
  { icon: <div className="rounded-full bg-white"><SiPostman className="h-6 w-6 text-[#ff6c37]" /></div> },
  { icon: <div className="flex h-6 w-6 items-center justify-center rounded-[3px] bg-[#f37623]"><SiXampp className="h-[24px] w-[24px] rounded-[3px] bg-white text-[#f37623]" /></div>, state: "running" },
  { icon: <Chrome />, state: "running" },
  { icon: <Terminal />, state: "multi" },
  { icon: <VsLogo className="h-6 w-6" />, state: "running" },
];

function SearchArt() {
  return (
    <svg viewBox="0 0 78 36" className="ml-auto mr-[1px] h-[35px] w-[76px]">
      <defs>
        <linearGradient id="wt" x1="0" x2="1"><stop offset="0" stopColor="#8fd0c0" /><stop offset=".5" stopColor="#8ccbe8" /><stop offset="1" stopColor="#4aa9e6" /></linearGradient>
        <radialGradient id="sk"><stop offset="0" stopColor="#f9b9a0" /><stop offset="1" stopColor="#f2f2f2" stopOpacity="0" /></radialGradient>
      </defs>
      <ellipse cx="36" cy="17" rx="32" ry="14" fill="url(#sk)" />
      <circle cx="27" cy="7" r="4.500" fill="#ffb54d" />
      <path d="M0 20c3-4 16-5 38-5s38 1 39 5c0 3-3 5-6 6 8 3 3 10-8 10H14c-9-1-10-7-4-9-6-1-10-3-10-7z" fill="url(#wt)" />
      <path d="M22 20c2-2 3-6 5-8l2-2 1.800-10 1.200 11 2 4 2.500-9 2 7 1.500 1 1.500-3 2 5 5 2 5 3-8 1H26z" fill="#6b5650" />
      <path d="M18 21l1.300-14 1.700 14zM56 21l2.500-4 1.500-9 1.500 8 3 5z" fill="#7d6a64" />
      <path d="M28 22h16l-5 4-3 6-3-7zM57 22h7l-3 4z" fill="#6f92a0" opacity=".6" />
    </svg>
  );
}

function Taskbar() {
  return (
    <div className="flex h-10 w-full items-center bg-[#353429] font-['Open_Sans','Noto_Sans',sans-serif] text-white">
      <div className="flex h-full w-12 shrink-0 items-center justify-center bg-[#211f1b]">
        <svg viewBox="0 0 16 16" className="h-4 w-4" fill="#fff"><path d="M0 2.300 6.500 1.400v6.200H0zM7.300 1.300 16 0v7.600H7.300zM0 8.400h6.500v6.200L0 13.700zM7.300 8.400H16V16l-8.700-1.300z" /></svg>
      </div>
      <div className="flex h-full w-[288px] shrink-0 items-center border border-[#b5b5b5] bg-[#f2f2f2] pl-[11px] text-[#333]">
        <Line className="h-[17px] w-[17px] text-[#222]" vb="0 0 17 17" d="M16 6a5 5 0 1 1-10 0 5 5 0 0 1 10 0zM7.300 9.700 1 16" w={1.200} />
        <span className="ml-[11px] whitespace-nowrap text-[15px] tracking-[-0.5px]">Type here to search</span>
        <SearchArt />
      </div>
      <div className="flex w-[51px] shrink-0 justify-center pr-[3px]">
        <Line className="h-4 w-4" d="M.5.500v2.500h10V.500M.5 15.500V13h10v2.500M.5 5h10v6H.5zM14.500.500v2M14.500 8v7.500M14.500 4.500v2" w={1.200} />
      </div>
      <div className="flex h-full gap-px">
        {apps.map((a, i) => (
          <div key={i} className={`flex h-full w-12 flex-col items-center ${a.state === "active" ? "bg-[#62615a]" : ""}`}>
            <div className="flex h-[38px] items-center pt-[2px]">{a.icon}</div>
            {a.state && (
              <div className={`flex h-[2px] bg-[#76b9ed] ${a.state === "active" ? "w-12" : "w-10"}`}>
                {a.state === "multi" && <div className="ml-auto h-full w-[9px] bg-[#4f7ba6]" />}
              </div>
            )}
          </div>
        ))}
      </div>
      <div className="ml-auto flex h-full items-center">
        <svg viewBox="0 0 24 24" className="h-6 w-6">
          <path d="M0 20h4v3H0zM6 19h4v4H6zM12 16h4v7h-4zM18 12h4.500v11H18z" fill="#67b51c" />
          <path d="M0 16c7-1 13-4 16.500-8.500L14 5V2h9v9l-3-1.500C16 15 8 18 0 18z" fill="#74cb1e" />
        </svg>
        <span className="ml-[8px] w-[65px] text-[14px] tracking-[-0.4px]">NASDAQ</span>
        <span className="w-[71px] text-[14px] tracking-[-0.3px] text-[#17c41a]">+1.30%</span>
        <Line className="h-[12px] w-[12px]" vb="0 0 12 12" d="M.8 8.500 6 3.300l5.200 5.200" w={1.200} />
        <svg viewBox="0 0 14 16" className="ml-[11px] h-4 w-[14px]" fill="none" stroke="#fff" strokeWidth="1.100"><rect x="2" y="4.500" width="7" height="7" rx="1.500" /><path d="M9 7l3-1.500v5L9 9M3.500 2C5.500.500 8.500.500 10 2M3.500 14c2 1.500 5 1.500 6.500 0" /></svg>
        <svg viewBox="0 0 16 14" className="ml-[9px] h-[14px] w-4" fill="none" stroke="#fff" strokeWidth="1.100"><path d="M4.500 1.500H15.500v8.500h-12V6M8 10v3M5 13.200h7M.5.700h3.500v4H.5zM2.200 4.700V13" /></svg>
        <svg viewBox="0 0 17 14" className="ml-[7px] h-[14px] w-[17px]" fill="none" stroke="#fff" strokeWidth="1.100"><path d="M.7 5h2.300l3.500-3.500v11L3 9H.7zM8.500 5c.8 1.300.8 2.700 0 4M11 3c1.800 2.500 1.800 5.500 0 8" /><path d="M13.500 1.500c2.500 3.500 2.500 7.500 0 11" stroke="#888" /></svg>
        <div className="ml-[8px] w-[28px] pt-px text-center text-[12px] leading-[18px] tracking-[-0.4px]">ENG<br />IN</div>
        <div className="ml-[8px] w-[56px] whitespace-nowrap text-center text-[12px] leading-[18px] tracking-[-0.5px]">12:27 PM<br />12/5/2024</div>
        <div className="relative ml-[15px] mr-[11px] h-[22px] w-[26px]">
          <svg viewBox="0 0 16 14" className="h-[14px] w-4"><path d="M0 0h16v11h-4v3l-3-3H0z" fill="#fff" /><path d="M3 3h10M3 5.500h10M3 8h6" stroke="#353429" /></svg>
          <span className="absolute left-[5px] top-[7px] flex h-[17px] w-[21px] items-center justify-center rounded-full border border-[#9a9a94] bg-[#3b3b35] text-[11px] font-bold leading-none">26</span>
        </div>
        <div className="mr-[4px] h-full w-px bg-[#77766d]" />
      </div>
    </div>
  );
}

export default function App() {
  return (
    <div className="relative flex h-[900px] w-[1600px] flex-col overflow-hidden bg-[#001126]">
      <Editor />
      <div className="absolute left-[100px] top-0 flex h-[859px] w-[1400px] flex-col border-b border-white bg-white font-['Inter',sans-serif] shadow-[0_0_10px_rgba(0,0,0,0.5)]">
        <TitleBar />
        <div className="flex min-h-0 flex-1 overflow-hidden">
          <LeftPanel />
          <Canvas />
          <RightPanel />
        </div>
        <div className="absolute right-[25px] top-[802px] flex h-8 w-8 items-center justify-center rounded-full bg-[#1e1e1e] text-[18px] font-light text-white">?</div>
      </div>
      <div className="pointer-events-none absolute left-[1295px] top-[773px] whitespace-nowrap font-['Open_Sans',sans-serif] text-[#a8a8a8]/80">
        <div className="text-[20px] leading-[28px] tracking-[-0.4px]">Activate Windows</div>
        <div className="-mt-px text-[15px] leading-[18px] tracking-[-0.28px]">Go to Settings to activate Windows.</div>
      </div>
      <Taskbar />
    </div>
  );
}
